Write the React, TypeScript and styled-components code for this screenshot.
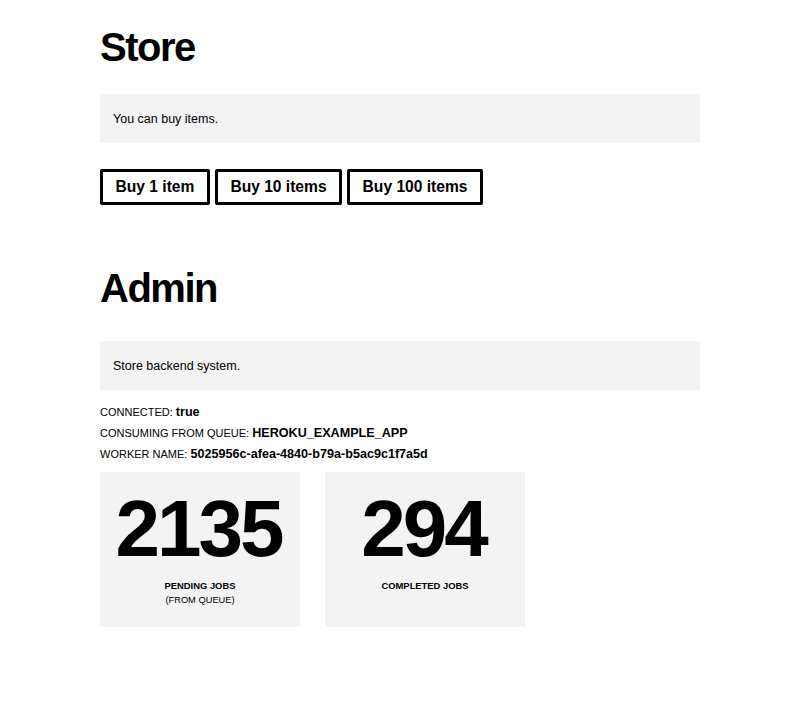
import React from "react";
import styled, { createGlobalStyle } from "styled-components";

const GlobalStyle = createGlobalStyle`
  html, body { margin: 0; padding: 0; background: #fff; }
  body { font-family: "Liberation Sans", Arial, Helvetica, sans-serif; color: #000; }
`;

const Page = styled.div`
  width: 600px;
  margin: 0 auto;
  padding-bottom: 60px;
`;

const Section = styled.section<{ $top: number }>`
  margin-top: ${(p) => p.$top}px;
`;

const Heading = styled.h1<{ $gap: number }>`
  font-size: 40px;
  font-weight: bold;
  line-height: 46px;
  letter-spacing: -1.5px;
  margin: 0 0 ${(p) => p.$gap}px;
`;

const Notice = styled.div`
  background: #f3f3f3;
  padding: 17px 13px 15px;
  font-size: 12.5px;
  line-height: 17px;
`;

const ButtonRow = styled.div`
  display: flex;
  gap: 5px;
  margin-top: 26px;
`;

const Button = styled.button`
  height: 36px;
  padding: 0 12.5px;
  border: 3px solid #000;
  border-radius: 2px;
  background: #fff;
  font-family: "Liberation Sans", Arial, sans-serif;
  font-size: 15.6px;
  font-weight: bold;
  color: #000;
  cursor: pointer;
`;

const InfoList = styled.div`
  margin-top: 12px;
  display: flex;
  flex-direction: column;
`;

const InfoLine = styled.div`
  font-size: 11px;
  line-height: 21px;
`;

const InfoValue = styled.strong`
  font-size: 12.6px;
  font-weight: bold;
`;

const Stats = styled.div`
  display: flex;
  gap: 25px;
  margin-top: 7px;
`;

const StatCard = styled.div`
  width: 200px;
  height: 155px;
  background: #f3f3f3;
  display: flex;
  flex-direction: column;
  align-items: center;
  padding-top: 11px;
  box-sizing: border-box;
`;

const StatNumber = styled.div`
  font-size: 80px;
  font-weight: bold;
  line-height: 92px;
  letter-spacing: -3px;
  margin-left: -3px;
`;

const StatLabel = styled.div`
  margin-top: 2.5px;
  font-size: 9.4px;
  font-weight: bold;
  line-height: 15px;
  text-transform: uppercase;
`;

const StatSub = styled.div`
  font-size: 9.3px;
  line-height: 15px;
`;

export default function App() {
  return (
    <>
      <GlobalStyle />
      <Page>
        <Section $top={24}>
          <Heading $gap={24}>Store</Heading>
          <Notice>You can buy items.</Notice>
          <ButtonRow>
            <Button>Buy 1 item</Button>
            <Button>Buy 10 items</Button>
            <Button>Buy 100 items</Button>
          </ButtonRow>
        </Section>
        <Section $top={60}>
          <Heading $gap={30}>Admin</Heading>
          <Notice>Store backend system.</Notice>
          <InfoList>
            <InfoLine>
              CONNECTED: <InfoValue>true</InfoValue>
            </InfoLine>
            <InfoLine>
              CONSUMING FROM QUEUE: <InfoValue>HEROKU_EXAMPLE_APP</InfoValue>
            </InfoLine>
            <InfoLine>
              WORKER NAME: <InfoValue>5025956c-afea-4840-b79a-b5ac9c1f7a5d</InfoValue>
            </InfoLine>
          </InfoList>
          <Stats>
            <StatCard>
              <StatNumber>2135</StatNumber>
              <StatLabel>Pending jobs</StatLabel>
              <StatSub>(FROM QUEUE)</StatSub>
            </StatCard>
            <StatCard>
              <StatNumber>294</StatNumber>
              <StatLabel>Completed jobs</StatLabel>
            </StatCard>
          </Stats>
        </Section>
      </Page>
    </>
  );
}
